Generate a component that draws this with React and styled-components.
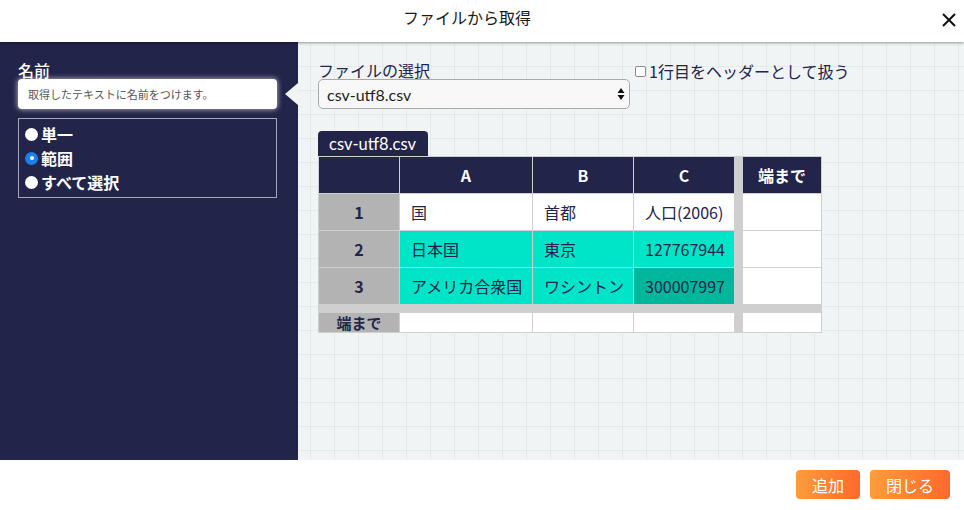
import React from 'react'
import styled, { createGlobalStyle } from 'styled-components';

const GlobalStyle = createGlobalStyle`
    html, body {
        margin:0;
        padding:0;
        background:#fff;
    }
    body {
        font-family: Lato, 'Noto Sans CJK JP', sans-serif;
    }
`;

const NAVY = '#22244a';

const Dialog = styled.div`
    width:964px;
    height:510px;
    display:flex;
    flex-direction:column;
    overflow:hidden;
`;

const Header = styled.div`
    height:42px;
    flex:none;
    display:flex;
    align-items:center;
    background:#fff;
    box-shadow:0 1px 3px rgba(0,0,0,0.35);
    position:relative;
    z-index:2;
`;

const Title = styled.div`
    flex:1;
    text-align:center;
    font-family: 'Noto Sans CJK JP', sans-serif;
    font-size:16px;
    color:#1a1a1a;
    padding-bottom:8px;
`;

const CloseButton = styled.div`
    width:30px;
    display:flex;
    justify-content:center;
    align-items:center;
    padding-bottom:3px;
    cursor:pointer;
`;

const Body = styled.div`
    height:418px;
    flex:none;
    display:flex;
`;

const Side = styled.div`
    width:298px;
    flex:none;
    background:${NAVY};
    padding:20px 21px 0 18px;
    box-sizing:border-box;
`;

const SideLabel = styled.div`
    color:#fff;
    font-size:16px;
    font-weight:500;
    line-height:17px;
    font-family: 'Noto Sans CJK JP', sans-serif;
`;

const NameInput = styled.div`
    height:30px;
    background:#fff;
    border-radius:4px;
    box-shadow:0 0 5px 1px rgba(255,255,255,0.55);
    display:flex;
    align-items:center;
    padding-left:10px;
    font-size:11px;
    color:#555;
    font-family: 'Noto Sans CJK JP', sans-serif;
`;

const RadioBox = styled.div`
    margin-top:9px;
    border:1px solid #a8a8b4;
    padding:3px 6px;
    display:flex;
    flex-direction:column;
`;

const RadioRow = styled.label`
    display:flex;
    align-items:center;
    height:24px;
    color:#fff;
    font-size:16px;
    font-weight:700;
    font-family: 'Noto Sans CJK JP', sans-serif;
    gap:3px;
`;

const RadioDot = styled.span`
    width:13px;
    height:13px;
    border-radius:50%;
    box-sizing:border-box;
    background:${props => props.checked ? '#1a80f0' : '#fff'};
    display:flex;
    align-items:center;
    justify-content:center;
    &::after{
        content:'';
        width:4px;
        height:4px;
        border-radius:50%;
        background:#fff;
        display:${props => props.checked ? 'block' : 'none'};
    }
`;

const Main = styled.div`
    flex:1;
    position:relative;
    background-color:#f0f4f5;
    background-image:
        linear-gradient(to right, #e5e9eb 1px, transparent 1px),
        linear-gradient(to bottom, #e5e9eb 1px, transparent 1px);
    background-size:24px 24px;
    background-position:12px 0, 0 0;
    padding:20px 0 0 20px;
    box-sizing:border-box;
`;

const Notch = styled.div`
    position:absolute;
    left:-13px;
    top:41px;
    width:0;
    height:0;
    border-top:11px solid transparent;
    border-bottom:11px solid transparent;
    border-right:13px solid #f0f4f5;
`;

const TopRow = styled.div`
    display:flex;
    align-items:flex-start;
    gap:5px;
`;

const FileField = styled.div`
    width:312px;
    display:flex;
    flex-direction:column;
`;

const FieldLabel = styled.div`
    color:${NAVY};
    font-size:16px;
    line-height:17px;
    font-family: 'Noto Sans CJK JP', sans-serif;
`;

const Select = styled.div`
    height:30px;
    box-sizing:border-box;
    border:1px solid #a9a9a9;
    border-radius:5px;
    background:#f8f8f8;
    display:flex;
    align-items:center;
    justify-content:space-between;
    padding:0 4px 0 8px;
    font-size:16px;
    color:#1e1e1e;
`;

const HeaderCheck = styled.label`
    display:flex;
    align-items:center;
    gap:3px;
    color:${NAVY};
    font-size:16px;
    line-height:17px;
    margin-top:1px;
    font-family: 'Noto Sans CJK JP', sans-serif;
`;

const CheckBox = styled.span`
    width:11px;
    height:11px;
    box-sizing:border-box;
    border:1px solid #8a8a8a;
    border-radius:2px;
    background:#fff;
`;

const Tab = styled.div`
    margin-top:22px;
    display:inline-flex;
    align-items:center;
    height:25px;
    padding:0 12px 0 11px;
    background:${NAVY};
    color:#fff;
    font-size:16.5px;
    border-radius:4px 4px 0 0;
`;

const Sheet = styled.div`
    display:grid;
    width:max-content;
    grid-template-columns:80px 132px 100px 100px 7px 78px;
    grid-template-rows:36px 36px 36px 36px 7px 19px;
    gap:1px;
    border:1px solid #cfcfcf;
    background:#cfcfcf;
`;

const Cell = styled.div`
    display:flex;
    align-items:center;
    font-size:16px;
    color:${NAVY};
    font-family: 'Noto Sans CJK JP', sans-serif;
    padding-left:11px;
    background:${props => {
        switch(props.kind){
            case 'head': return NAVY;
            case 'rowhead': return '#b3b3b3';
            case 'sel': return '#00e4c7';
            case 'cursor': return '#00b79c';
            case 'gap': return 'transparent';
            default: return '#fff';
        }
    }};
    ${props => (props.kind === 'head' || props.kind === 'rowhead') && `
        justify-content:center;
        padding-left:0;
        font-weight:700;
    `}
    ${props => props.kind === 'head' && `color:#fff;`}
    ${props => props.small && `font-size:15px;`}
`;

const Footer = styled.div`
    height:50px;
    flex:none;
    background:#fff;
    display:flex;
    justify-content:flex-end;
    align-items:flex-start;
    gap:10px;
    padding:10px 14px 0 0;
    box-sizing:border-box;
`;

const Button = styled.button`
    height:29px;
    width:${props => props.w}px;
    border:none;
    border-radius:4px;
    background:linear-gradient(to right, #fd9c3b, #ff692b);
    color:#fff;
    font-size:16px;
    font-family: 'Noto Sans CJK JP', sans-serif;
    padding:0;
    cursor:pointer;
`;

const rows = [
    ['1', ['国', ''], ['首都', ''], ['人口(2006)', '']],
    ['2', ['日本国', 'sel'], ['東京', 'sel'], ['127767944', 'sel']],
    ['3', ['アメリカ合衆国', 'sel'], ['ワシントン', 'sel'], ['300007997', 'cursor']],
];

function App() {
    return (
        <>
            <GlobalStyle />
            <Dialog>
                <Header>
                    <Title>ファイルから取得</Title>
                    <CloseButton>
                        <svg width="16" height="16" viewBox="0 0 16 16">
                            <path d="M2 2L14 14M14 2L2 14" stroke="#111" strokeWidth="2" />
                        </svg>
                    </CloseButton>
                </Header>
                <Body>
                    <Side>
                        <SideLabel>名前</SideLabel>
                        <NameInput>取得したテキストに名前をつけます。</NameInput>
                        <RadioBox>
                            <RadioRow><RadioDot />単一</RadioRow>
                            <RadioRow><RadioDot checked />範囲</RadioRow>
                            <RadioRow><RadioDot />すべて選択</RadioRow>
                        </RadioBox>
                    </Side>
                    <Main>
                        <Notch />
                        <TopRow>
                            <FileField>
                                <FieldLabel>ファイルの選択</FieldLabel>
                                <Select>
                                    csv-utf8.csv
                                    <svg width="8" height="14" viewBox="0 0 8 14">
                                        <path d="M4 1L7.5 6H0.5Z M4 13L7.5 8H0.5Z" fill="#111" />
                                    </svg>
                                </Select>
                            </FileField>
                            <HeaderCheck><CheckBox />1行目をヘッダーとして扱う</HeaderCheck>
                        </TopRow>
                        <Tab>csv-utf8.csv</Tab>
                        <Sheet>
                            <Cell kind="head" />
                            <Cell kind="head">A</Cell>
                            <Cell kind="head">B</Cell>
                            <Cell kind="head">C</Cell>
                            <Cell kind="gap" />
                            <Cell kind="head">端まで</Cell>
                            {rows.map(r => (
                                <React.Fragment key={r[0]}>
                                    <Cell kind="rowhead">{r[0]}</Cell>
                                    {r.slice(1).map((c, i) => (
                                        <Cell key={i} kind={c[1]}>{c[0]}</Cell>
                                    ))}
                                    <Cell kind="gap" />
                                    <Cell />
                                </React.Fragment>
                            ))}
                            <Cell kind="gap" style={{ gridColumn: '1 / -1' }} />
                            <Cell kind="rowhead" small>端まで</Cell>
                            <Cell />
                            <Cell />
                            <Cell />
                            <Cell kind="gap" />
                            <Cell />
                        </Sheet>
                    </Main>
                </Body>
                <Footer>
                    <Button w={64}>追加</Button>
                    <Button w={80}>閉じる</Button>
                </Footer>
            </Dialog>
        </>
    )
}

export default App
